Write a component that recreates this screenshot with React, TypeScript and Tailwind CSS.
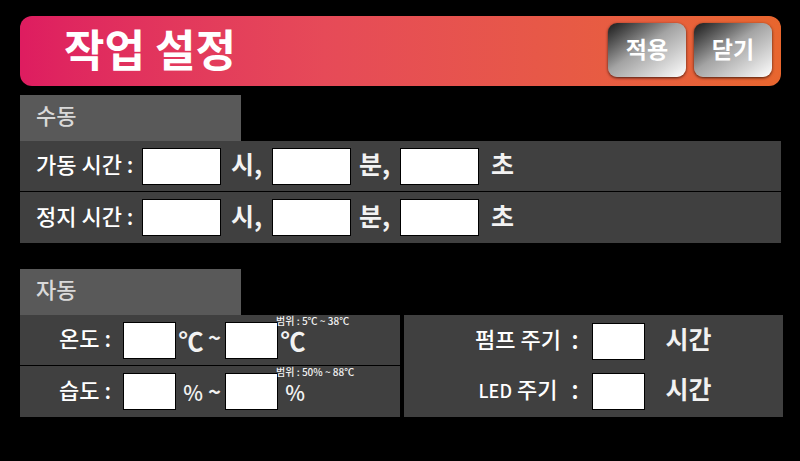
import { useId } from "react";
import type { ReactNode } from "react";

const FIELD = "h-[37px] shrink-0 border border-black bg-white px-1 text-center text-[22px] text-black outline-none";
const LABEL = "text-[22px] leading-8 font-medium text-white";
const UNIT = "text-[25px] leading-8 font-bold text-[#f2f2f2]";

function HeaderButton({ children }: { children: ReactNode }) {
  return (
    <button
      type="button"
      className="h-[54px] w-[78px] rounded-[9px] bg-linear-to-br from-[#1c1c1c] via-[#a3a3a3] via-45% to-white pb-1 text-[23px] leading-8 font-bold text-white shadow-[0_1px_3px_rgba(0,0,0,0.7)]"
    >
      {children}
    </button>
  );
}

function SectionTab({ children }: { children: ReactNode }) {
  return (
    <h2 className="h-[46px] w-[221px] bg-[#595959] pt-[3px] pl-4 text-[22px] leading-8 font-medium text-[#d9d9d9]">
      {children}
    </h2>
  );
}

function TimeRow({ title }: { title: string }) {
  const id = useId();
  return (
    <div className="flex h-[51px] items-center bg-[#404040] pl-4">
      <label htmlFor={id + "h"} className={"w-[106px] shrink-0 pb-1.5 " + LABEL}>
        {title} :
      </label>
      <input id={id + "h"} type="text" className={"w-[79px] " + FIELD} />
      <label htmlFor={id + "h"} className={"w-[51px] shrink-0 pb-1.5 pl-2.5 " + UNIT}>
        시,
      </label>
      <input id={id + "m"} type="text" className={"w-[79px] " + FIELD} />
      <label htmlFor={id + "m"} className={"w-[49px] shrink-0 pb-1.5 pl-2 " + UNIT}>
        분,
      </label>
      <input id={id + "s"} type="text" className={"w-[79px] " + FIELD} />
      <label htmlFor={id + "s"} className={"shrink-0 pb-1.5 pl-3 " + UNIT}>
        초
      </label>
    </div>
  );
}

function Unit({ unit }: { unit: string }) {
  return unit === "%" ? (
    <span className="w-[26px] pl-1 text-center text-[21px] leading-5 font-medium">%</span>
  ) : (
    <span className="w-[26px] text-center text-[25px] leading-6">{unit}</span>
  );
}

function RangeRow({ title, unit, note }: { title: string; unit: string; note: string }) {
  const id = useId();
  return (
    <div className="flex h-[51px] items-center bg-[#404040] pl-[39px]">
      <label htmlFor={id + "a"} className={"w-16 shrink-0 pb-1.5 " + LABEL}>
        {title} :
      </label>
      <input id={id + "a"} type="text" className={"w-[53px] " + FIELD} />
      <label htmlFor={id + "a"} className="flex w-[49px] shrink-0 pl-0.5 font-bold text-[#f2f2f2]">
        <Unit unit={unit} />
        <span className="grow text-center text-[22px] leading-4">~</span>
      </label>
      <input id={id + "b"} type="text" className={"w-[53px] " + FIELD} />
      <div className="relative flex h-full items-center">
        <label htmlFor={id + "b"} className="flex pl-0.5 font-bold text-[#f2f2f2]">
          <Unit unit={unit} />
        </label>
        <span className="absolute top-0 -left-0.5 text-[10px] leading-3 font-medium whitespace-nowrap text-[#f2f2f2]">
          {note}
        </span>
      </div>
    </div>
  );
}

function CycleRow({ title }: { title: ReactNode }) {
  const id = useId();
  return (
    <div className="flex h-[50px] items-center pl-[70px]">
      <label htmlFor={id} className={"flex w-[118px] shrink-0 items-center pb-1.5 " + LABEL}>
        <span className="w-[89px] text-center">{title}</span>
        <span className="grow pr-1 text-center text-[25px]">:</span>
      </label>
      <input id={id} type="text" className={"w-[53px] " + FIELD} />
      <label htmlFor={id} className={"shrink-0 pb-1.5 pl-[21px] " + UNIT}>
        시간
      </label>
    </div>
  );
}

export default function App() {
  return (
    <main className="min-h-screen bg-black pt-4 pl-5 font-['Noto_Sans_CJK_KR',sans-serif]">
      <header className="mr-[19px] flex h-[70px] items-center rounded-xl bg-linear-to-r from-[#de1c60] via-[#e64a58] via-40% to-[#e8662e] pr-[9px] pl-11">
        <h1 className="grow pb-1.5 text-[44px] leading-[60px] font-bold text-white">작업 설정</h1>
        <div className="flex gap-2 pb-0.5">
          <HeaderButton>적용</HeaderButton>
          <HeaderButton>닫기</HeaderButton>
        </div>
      </header>

      <section className="mt-[9px] mr-[19px]">
        <SectionTab>수동</SectionTab>
        <div className="divide-y divide-black">
          <TimeRow title="가동 시간" />
          <TimeRow title="정지 시간" />
        </div>
      </section>

      <section className="mt-[26px] mr-[17px]">
        <SectionTab>자동</SectionTab>
        <div className="grid grid-cols-2 gap-1">
          <div className="divide-y divide-black">
            <RangeRow title="온도" unit="℃" note="범위 : 5℃ ~ 38℃" />
            <RangeRow title="습도" unit="%" note="범위 : 50% ~ 88℃" />
          </div>
          <div className="bg-[#404040] pt-px">
            <CycleRow title="펌프 주기" />
            <CycleRow
              title={
                <>
                  <span className="text-lg">LED</span> 주기
                </>
              }
            />
          </div>
        </div>
      </section>
    </main>
  );
}
